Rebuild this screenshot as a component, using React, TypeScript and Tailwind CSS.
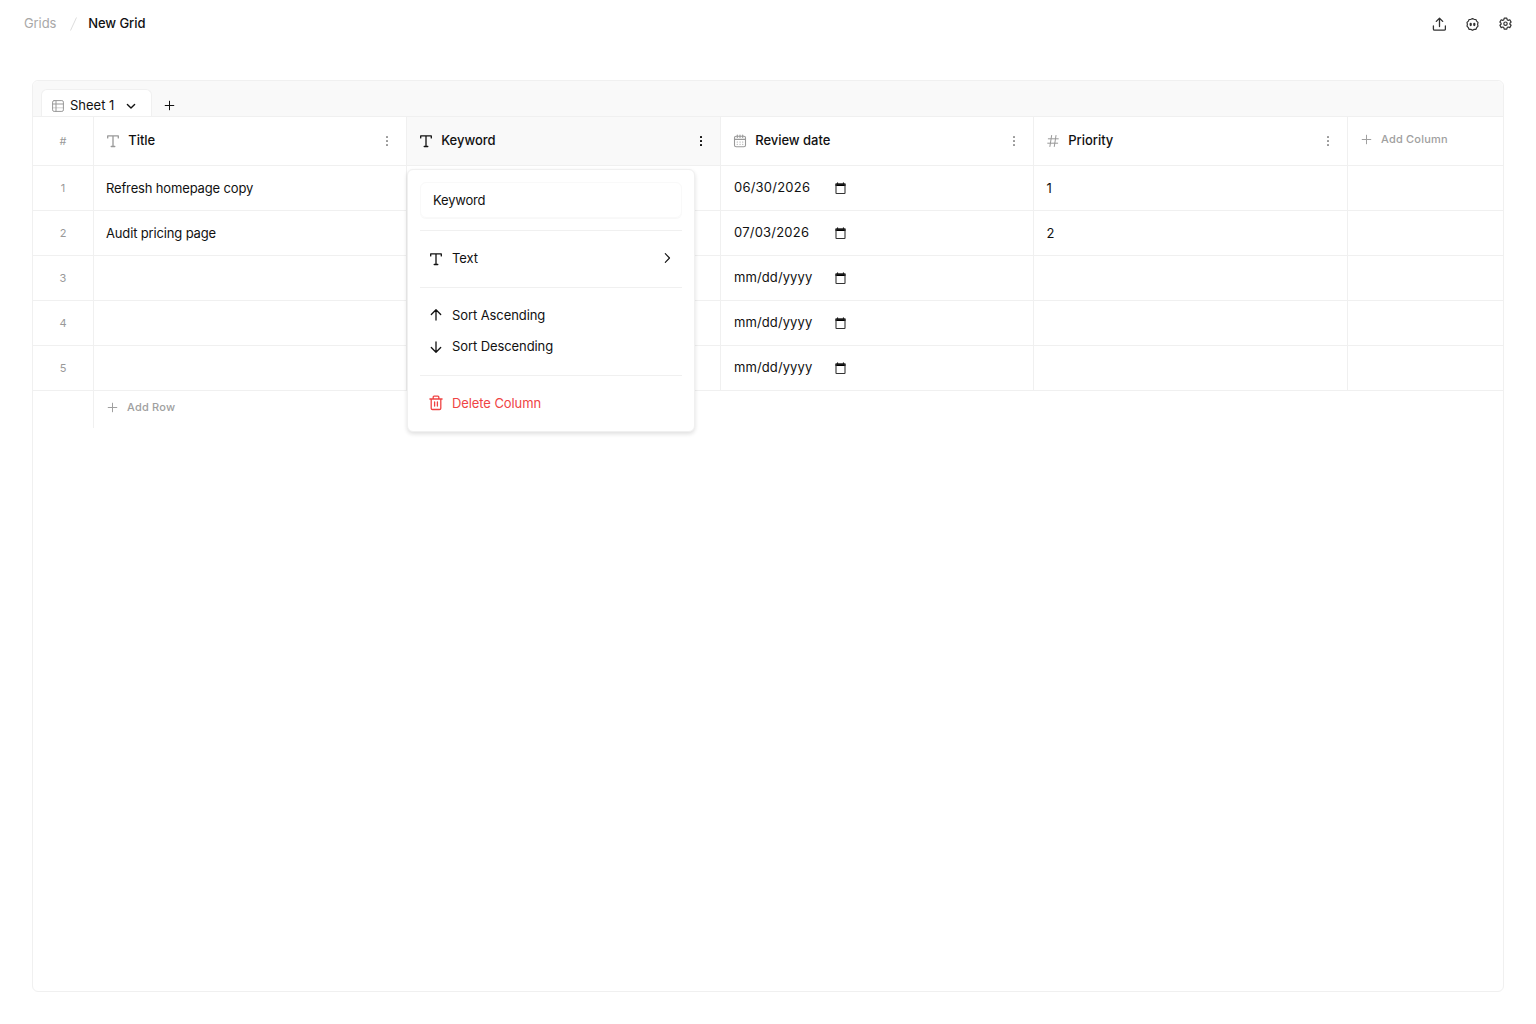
import type { ReactNode } from "react";

type IconProps = { className?: string };

function Svg({ size, className = "", children, width = 1.2 }: { size: number; className?: string; children: ReactNode; width?: number }) {
  return (
    <svg width={size} height={size} viewBox={`0 0 ${size} ${size}`} fill="none" stroke="currentColor" strokeWidth={width} strokeLinecap="round" strokeLinejoin="round" className={`shrink-0 ${className}`}>
      {children}
    </svg>
  );
}

const TextIcon = ({ className }: IconProps) => (
  <Svg size={14} className={className} width={1.3}>
    <path d="M1.7 3.9V1.9h10.6v2M7 1.9v10.6M5.2 12.5h3.6" />
  </Svg>
);

const CalendarIcon = ({ className }: IconProps) => (
  <Svg size={14} className={className} width={1.1}>
    <rect x="1.5" y="2.2" width="11" height="10.6" rx="1.6" />
    <path d="M1.5 5.4h11M4.3 1v2.4M7 1v2.4M9.7 1v2.4" />
    <path d="M4.2 8h.1M7 8h.1M9.7 8h.1M4.2 10.3h.1M7 10.3h.1M9.7 10.3h.1" />
  </Svg>
);

const HashIcon = ({ className }: IconProps) => (
  <Svg size={14} className={className} width={1}>
    <path d="M5.6 1.5 3.9 12.5M10 1.5 8.3 12.5M2.3 4.8h10M1.7 9.2h10" />
  </Svg>
);

const DotsIcon = ({ className }: IconProps) => (
  <svg width="14" height="14" viewBox="0 0 14 14" fill="currentColor" className={`shrink-0 ${className}`}>
    <rect x="6" y="2" width="2" height="2" rx=".5" />
    <rect x="6" y="6" width="2" height="2" rx=".5" />
    <rect x="6" y="10" width="2" height="2" rx=".5" />
  </svg>
);

const PlusIcon = ({ className }: IconProps) => (
  <Svg size={11} className={className} width={1}>
    <path d="M5.5 1.2v8.6M1.2 5.5h8.6" />
  </Svg>
);

const DateGlyph = () => (
  <svg width="12" height="13" viewBox="0 0 12 13" className="shrink-0" fill="none">
    <path d="M.5 1.5h10v2.4H.5zM2 .4h1.1v1.4H2zM7.9.4H9v1.4H7.9z" fill="#000" />
    <rect x="1" y="2" width="9" height="9.5" rx=".5" stroke="#333" strokeWidth="1.1" />
  </svg>
);

const columns = [
  { name: "Title", Icon: TextIcon, width: "w-[313px]" },
  { name: "Keyword", Icon: TextIcon, width: "w-[314px]", active: true },
  { name: "Review date", Icon: CalendarIcon, width: "w-[313px]" },
  { name: "Priority", Icon: HashIcon, width: "w-[314px]" },
];

const rows = [
  { title: "Refresh homepage copy", date: "06/30/2026", priority: "1" },
  { title: "Audit pricing page", date: "07/03/2026", priority: "2" },
  { title: "", date: "mm/dd/yyyy", priority: "" },
  { title: "", date: "mm/dd/yyyy", priority: "" },
  { title: "", date: "mm/dd/yyyy", priority: "" },
];

function MenuItem({ icon, label, trailing, className = "" }: { icon: ReactNode; label: string; trailing?: ReactNode; className?: string }) {
  return (
    <button className={`flex h-[31px] w-full items-center gap-[9px] px-[9px] text-left tracking-[-0.09px] ${className}`}>
      {icon}
      <span className="flex-1 pb-[2px]">{label}</span>
      {trailing}
    </button>
  );
}

const Divider = ({ className = "mt-[13px]" }: IconProps) => <div className={`mb-3 h-px bg-[#f0f0f0] ${className}`} />;

function ColumnMenu() {
  return (
    <div className="absolute top-[52px] left-0 z-10 h-[263px] w-[288px] rounded-md border border-[#f0f0f0] bg-white p-3 text-[#111] shadow-[0_2px_4px_rgba(0,0,0,0.13)]">
      <div className="flex h-9 items-center rounded-md border border-[#f9f9f9] px-3 tracking-[-0.2px] shadow-[0_1px_1px_rgba(0,0,0,0.03)]">Keyword</div>
      <Divider className="mt-3" />
      <MenuItem
        icon={<TextIcon />}
        label="Text"
        trailing={
          <Svg size={12} width={1.1} className="mb-px">
            <path d="m4.3 1.7 4.2 4.3-4.2 4.3" />
          </Svg>
        }
      />
      <Divider />
      <MenuItem icon={<Svg size={14} width={1.3} className="mb-[2px]"><path d="M7 12V2M2.3 6.5 7 1.8l4.7 4.7" /></Svg>} label="Sort Ascending" />
      <MenuItem icon={<Svg size={14} width={1.3}><path d="M7 2v10M2.3 7.5 7 12.2l4.7-4.7" /></Svg>} label="Sort Descending" />
      <Divider />
      <MenuItem
        className="text-[#ef4444]"
        icon={
          <svg width="14" height="16" viewBox="0 0 14 16" fill="none" stroke="currentColor" strokeWidth="1.3" strokeLinecap="round" strokeLinejoin="round" className="mb-px shrink-0">
            <path d="M.9 4h12.2M2.2 4v9.2q0 1.3 1.3 1.3h7q1.3 0 1.3-1.3V4M4.2 4V2.1q0-.9.9-.9h3.8q.9 0 .9.9V4M5.6 7v4M8.4 7v4" />
          </svg>
        }
        label="Delete Column"
      />
    </div>
  );
}

export default function App() {
  return (
    <div className="flex h-[1024px] w-[1536px] flex-col bg-white font-['Inter',sans-serif] text-[13px] leading-5 text-[#111]">
      <header className="flex h-12 items-center pr-6 pl-6">
        <nav className="flex flex-1 items-center pb-[2px]">
          <span className="tracking-[-0.1px] text-[#a8a8a8]">Grids</span>
          <svg width="8" height="14" viewBox="0 0 8 14" className="mt-px mr-[10px] ml-[14px]" fill="none" stroke="#ddd">
            <path d="M6.5 .5 .5 13.5" />
          </svg>
          <span className="font-medium tracking-[-0.08px]">New Grid</span>
        </nav>
        <div className="flex items-center text-[#333]">
          <Svg size={14} width={1.3}>
            <path d="M7.5 9.5V1.4M4.3 4.4 7.5 1.2l3.2 3.2M1.4 9v3q0 1.2 1.2 1.2h9.6q1.2 0 1.2-1.2V9" />
          </Svg>
          <Svg size={14} className="ml-[19px]">
            <g transform="translate(.5 .2)">
              <path d="M7 1.4 8.6 2.1 10.4 2.3 11.1 3.9 12.5 5.2 12.1 7.2 12.5 9 11.2 10.4 10.5 12.1 8.7 12.2 7 13.1 5.3 12.2 3.5 12.1 2.8 10.4 1.5 9 1.9 7.2 1.5 5.2 2.9 3.9 3.6 2.3 5.4 2.1Z" />
              <path d="M5.2 6.6v1.3M8.8 6.6v1.3" strokeWidth="2.2" />
            </g>
          </Svg>
          <Svg size={14} className="mb-[1px] ml-[19px]" width={1.2}>
            <g transform="translate(.5 -.3)">
              <path d="M5.7 1.5h2.6l.4 1.6 1 .6 1.6-.6 1.3 2.3L11.4 6.5v1l1.2 1.1-1.3 2.3-1.6-.6-1 .6-.4 1.6H5.7l-.4-1.6-1-.6-1.6.6-1.3-2.3 1.2-1.1v-1L1.4 5.4l1.3-2.3 1.6.6 1-.6Z" />
              <circle cx="7" cy="7" r="1.7" />
            </g>
          </Svg>
        </div>
      </header>

      <main className="mx-8 mt-8 h-[912px] rounded-md border border-[#f0f0f0]">
        <div className="flex h-9 items-end rounded-t-md border-b border-[#f0f0f0] bg-[#f9f9f9] pl-2">
          <div className="flex h-[27px] w-[111px] items-center rounded-t-md border border-b-0 border-[#f0f0f0] bg-white px-[10px] pt-[5px]">
            <Svg size={12} className="text-[#999]" width={1}>
              <rect x=".6" y=".6" width="10.8" height="10.8" rx="1.5" />
              <path d="M.6 4h10.8M4 .6v10.8" />
              <path d="M.6 7.8h10.8" strokeOpacity=".45" />
            </Svg>
            <span className="ml-[6px] pb-px">Sheet 1</span>
            <Svg size={10} className="ml-[12px]" width={1.4}>
              <path d="m1.4 3.4 3.6 3.5 3.6-3.5" />
            </Svg>
          </div>
          <PlusIcon className="mb-[5px] ml-3" />
        </div>

        <div className="flex h-[49px] border-b border-[#f0f0f0]">
          <div className="flex w-[61px] items-center justify-center border-r border-[#f0f0f0] text-[11px] text-[#999]">#</div>
          {columns.map(({ name, Icon, width, active }) => (
            <div key={name} className={`relative flex items-center border-r border-[#f0f0f0] px-3 ${width} ${active ? "bg-[#f9f9f9]" : ""}`}>
              <Icon className={active ? "" : "text-[#999]"} />
              <span className="ml-[8.2px] flex-1 pb-[2px] font-medium tracking-[-0.03px]">{name}</span>
              <DotsIcon className={active ? "" : "text-[#999]"} />
              {active && <ColumnMenu />}
            </div>
          ))}
          <div className="flex flex-1 items-center pb-1 pl-[13px] text-[11px] font-medium tracking-[0.2px] text-[#a0a0a0]">
            <PlusIcon />
            <span className="ml-[9px]">Add Column</span>
          </div>
        </div>

        {rows.map((row, i) => (
          <div key={i} className="flex h-[45px] border-b border-[#f0f0f0]">
            <div className="flex w-[61px] items-center justify-center border-r border-[#f0f0f0] text-[11px] text-[#999]">{i + 1}</div>
            <div className="flex w-[313px] items-center border-r border-[#f0f0f0] px-3 tracking-[-0.15px]">{row.title}</div>
            <div className="w-[314px] border-r border-[#f0f0f0]" />
            <div className="flex w-[313px] items-center border-r border-[#f0f0f0] px-[13px]">
              <span className={`w-[101px] pb-[2px] ${row.title ? "tracking-[0.22px]" : "tracking-[0.1px]"}`}>{row.date}</span>
              <DateGlyph />
            </div>
            <div className="flex w-[314px] items-center border-r border-[#f0f0f0] px-[12.5px]">{row.priority}</div>
          </div>
        ))}

        <div className="flex h-[37px]">
          <div className="w-[61px] border-r border-[#f0f0f0]" />
          <div className="flex items-center pb-[5px] pl-[13px] text-[11px] font-medium tracking-[0.2px] text-[#a0a0a0]">
            <PlusIcon />
            <span className="ml-[9px]">Add Row</span>
          </div>
        </div>
      </main>
    </div>
  );
}
